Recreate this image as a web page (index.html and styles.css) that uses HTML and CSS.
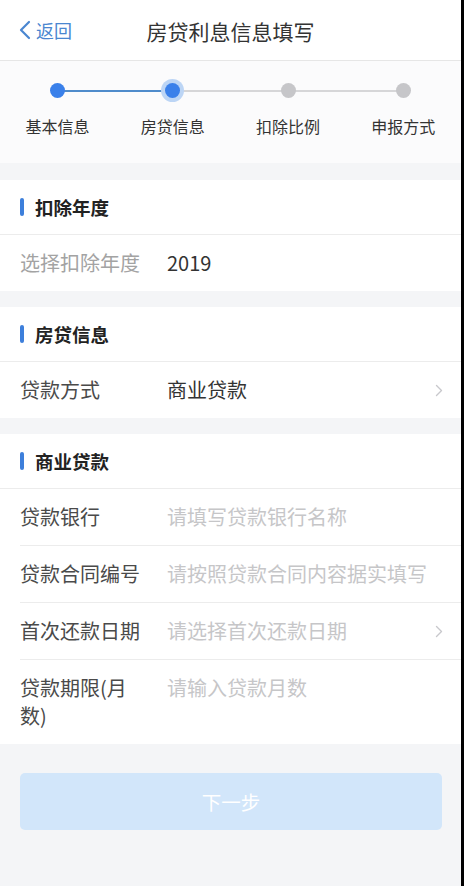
FILE: index.html
```html
<!DOCTYPE html>
<html lang="zh-CN">
<head>
<meta charset="utf-8">
<title>房贷利息信息填写</title>
<link rel="stylesheet" href="styles.css">
</head>
<body>
<div class="app">
  <header class="nav">
    <a class="back">
      <svg class="back-icon" width="14" height="20" viewBox="0 0 14 20"><path d="M11 2 L3 10 L11 18" fill="none" stroke="#4a86d0" stroke-width="2.2" stroke-linecap="round" stroke-linejoin="round"/></svg>
      <span>返回</span>
    </a>
    <h1 class="title">房贷利息信息填写</h1>
    <span></span>
  </header>

  <section class="steps">
    <div class="step done first"><span class="dot"></span><span class="step-label">基本信息</span></div>
    <div class="step current"><span class="dot"></span><span class="step-label">房贷信息</span></div>
    <div class="step"><span class="dot"></span><span class="step-label">扣除比例</span></div>
    <div class="step last"><span class="dot"></span><span class="step-label">申报方式</span></div>
  </section>

  <section class="card">
    <div class="card-head"><span class="bar"></span>扣除年度</div>
    <div class="row">
      <span class="label muted">选择扣除年度</span>
      <span class="value">2019</span>
    </div>
  </section>

  <section class="card">
    <div class="card-head"><span class="bar"></span>房贷信息</div>
    <div class="row">
      <span class="label">贷款方式</span>
      <span class="value">商业贷款</span>
      <svg class="chev" width="8" height="13" viewBox="0 0 8 13"><path d="M1.5 1.5 L6.5 6.5 L1.5 11.5" fill="none" stroke="#c8c8cc" stroke-width="1.4" stroke-linecap="round" stroke-linejoin="round"/></svg>
    </div>
  </section>

  <section class="card">
    <div class="card-head"><span class="bar"></span>商业贷款</div>
    <div class="row">
      <span class="label">贷款银行</span>
      <span class="value placeholder">请填写贷款银行名称</span>
    </div>
    <div class="row">
      <span class="label">贷款合同编号</span>
      <span class="value placeholder">请按照贷款合同内容据实填写</span>
    </div>
    <div class="row">
      <span class="label">首次还款日期</span>
      <span class="value placeholder">请选择首次还款日期</span>
      <svg class="chev" width="8" height="13" viewBox="0 0 8 13"><path d="M1.5 1.5 L6.5 6.5 L1.5 11.5" fill="none" stroke="#c8c8cc" stroke-width="1.4" stroke-linecap="round" stroke-linejoin="round"/></svg>
    </div>
    <div class="row tall">
      <span class="label">贷款期限(月数)</span>
      <span class="value placeholder">请输入贷款月数</span>
    </div>
  </section>

  <div class="actions">
    <button class="next" type="button">下一步</button>
  </div>
</div>
</body>
</html>
```
FILE: styles.css
```css
* { box-sizing: border-box; }

html, body {
  margin: 0;
  padding: 0;
  background: #000;
}

body {
  font-family: "Noto Sans CJK SC", "Noto Sans", sans-serif;
  color: #333;
}

.app {
  width: 461px;
  min-height: 886px;
  background: #f4f5f7;
}

/* nav */
.nav {
  height: 61px;
  background: #fff;
  border-bottom: 1px solid #e6e6e6;
  display: grid;
  grid-template-columns: 1fr auto 1fr;
  align-items: center;
}

.back {
  display: flex;
  align-items: center;
  padding-left: 18px;
  color: #4a86d0;
  font-size: 18px;
  gap: 4px;
}

.back-icon { display: block; margin-top: -1px; }

.title {
  margin: 0;
  font-size: 21px;
  font-weight: 400;
  color: #333;
  line-height: 1;
  padding-top: 2px;
}

/* steps */
.steps {
  background: #fbfbfc;
  display: grid;
  grid-template-columns: repeat(4, 1fr);
  padding-top: 21px;
  height: 102px;
  margin-bottom: 17px;
}

.step {
  position: relative;
  display: flex;
  flex-direction: column;
  align-items: center;
}

.step::before,
.step::after {
  content: "";
  position: absolute;
  top: 8px;
  height: 1.5px;
  width: 50%;
  background: #d6d6d8;
}

.step::before { left: 0; }
.step::after { right: 0; }
.step.first::before { display: none; }
.step.last::after { display: none; }
.step.done::after { background: #4f8bcb; }
.step.current::before { background: #4f8bcb; }

.dot {
  position: relative;
  z-index: 1;
  width: 15px;
  height: 15px;
  margin: 1px 0;
  border-radius: 50%;
  background: #c6c6c9;
}

.step.done .dot { background: #3a80ea; }

.step.current .dot {
  background: #3a80ea;
  box-shadow: 0 0 0 4px #bcd5f5;
}

.step-label {
  margin-top: 17px;
  font-size: 16px;
  line-height: 20px;
  color: #333;
}

/* cards */
.card {
  background: #fff;
  margin-bottom: 16px;
}

.card-head {
  height: 55px;
  display: flex;
  align-items: center;
  padding-left: 20px;
  font-size: 18.5px;
  font-weight: 700;
  color: #222;
  border-bottom: 1px solid #ececec;
}

.bar {
  width: 4px;
  height: 18px;
  border-radius: 2px;
  background: #3d7fdb;
  margin-right: 11px;
}

.row {
  min-height: 56px;
  display: flex;
  align-items: center;
  padding: 0 24px 0 20px;
  font-size: 20px;
  line-height: 28px;
  position: relative;
}

.row + .row::before {
  content: "";
  position: absolute;
  left: 20px;
  right: 0;
  top: -1px;
  height: 1px;
  background: #ececec;
}

.row + .row { margin-top: 1px; }

.row.tall {
  align-items: flex-start;
  padding-top: 14px;
  padding-bottom: 14px;
}

.label {
  flex: 0 0 122px;
  margin-right: 25px;
  color: #4a4a4a;
}

.label.muted { color: #a3a3a3; }

.value {
  flex: 1;
  color: #333;
}

.value.placeholder { color: #c6c6c8; }

.chev { display: block; flex: none; margin-right: -6px; }

/* actions */
.actions {
  padding: 13px 19px 0 20px;
}

.next {
  display: block;
  width: 100%;
  height: 57px;
  border: 0;
  border-radius: 5px;
  background: #d2e6fa;
  color: #fff;
  font-family: inherit;
  font-size: 19.5px;
}
```
